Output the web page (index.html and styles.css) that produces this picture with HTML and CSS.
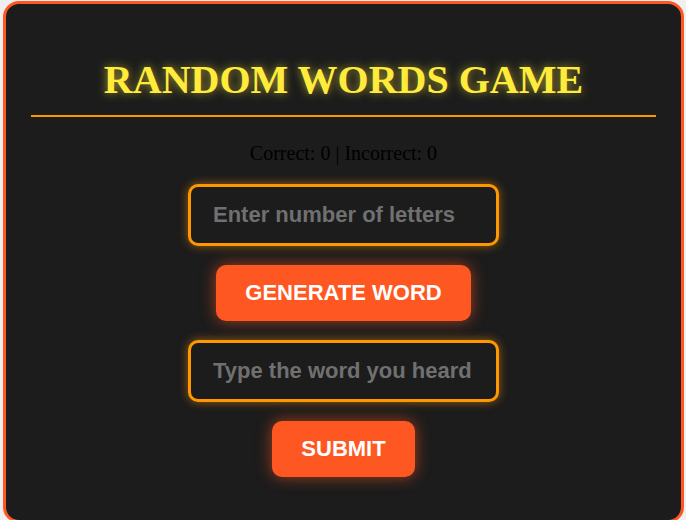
FILE: index.html
```html
<!DOCTYPE html>
<html lang="en">
<head>
<meta charset="utf-8">
<title>Random Words Game</title>
<link rel="stylesheet" href="styles.css">
</head>
<body>
<div class="game">
  <h1 class="title">RANDOM WORDS GAME</h1>
  <p class="score">Correct: 0 | Incorrect: 0</p>
  <div class="controls">
    <input class="field" type="number" placeholder="Enter number of letters">
    <button class="btn btn-generate">GENERATE WORD</button>
    <input class="field" type="text" placeholder="Type the word you heard">
    <button class="btn btn-submit">SUBMIT</button>
  </div>
</div>
</body>
</html>
```
FILE: styles.css
```css
html, body {
  margin: 0;
  padding: 0;
  background: #efefef;
}
body {
  padding: 1px 2px 0 3px;
  font-family: "Liberation Serif", "Times New Roman", serif;
}
.game {
  box-sizing: border-box;
  width: 681px;
  height: 522px;
  background: #1c1c1c;
  border: 3px solid #ff5722;
  border-radius: 16px;
  padding: 0 25px;
}
.title {
  margin: 53px 0 0;
  padding-bottom: 12px;
  border-bottom: 2px solid #ff9800;
  text-align: center;
  font-family: "Liberation Serif", "Times New Roman", serif;
  font-weight: bold;
  font-size: 40px;
  line-height: 46px;
  color: #ffeb3b;
  text-shadow: 0 0 10px rgba(255, 235, 59, 0.6);
}
.score {
  margin: 25px 0 0;
  text-align: center;
  font-size: 20px;
  line-height: 23px;
  color: #000;
}
.controls {
  display: flex;
  flex-direction: column;
  align-items: center;
  gap: 19px;
  margin-top: 19px;
}
.field {
  box-sizing: border-box;
  width: 311px;
  height: 62px;
  padding: 0 22px;
  background: #1c1c1c;
  border: 3px solid #ff9800;
  border-radius: 10px;
  box-shadow: 0 0 10px rgba(255, 152, 0, 0.55);
  font-family: "Liberation Sans", Arial, sans-serif;
  font-weight: bold;
  font-size: 22px;
  color: #fff;
  outline: none;
}
.field::placeholder {
  color: #707070;
  opacity: 1;
}
.field::-webkit-outer-spin-button,
.field::-webkit-inner-spin-button {
  -webkit-appearance: none;
  margin: 0;
}
.btn {
  box-sizing: border-box;
  height: 56px;
  padding: 0 29px;
  background: #ff5722;
  border: none;
  border-radius: 10px;
  box-shadow: 0 0 15px rgba(255, 87, 34, 0.6);
  font-family: "Liberation Sans", Arial, sans-serif;
  font-weight: bold;
  font-size: 22px;
  color: #fff;
  cursor: pointer;
}
```
